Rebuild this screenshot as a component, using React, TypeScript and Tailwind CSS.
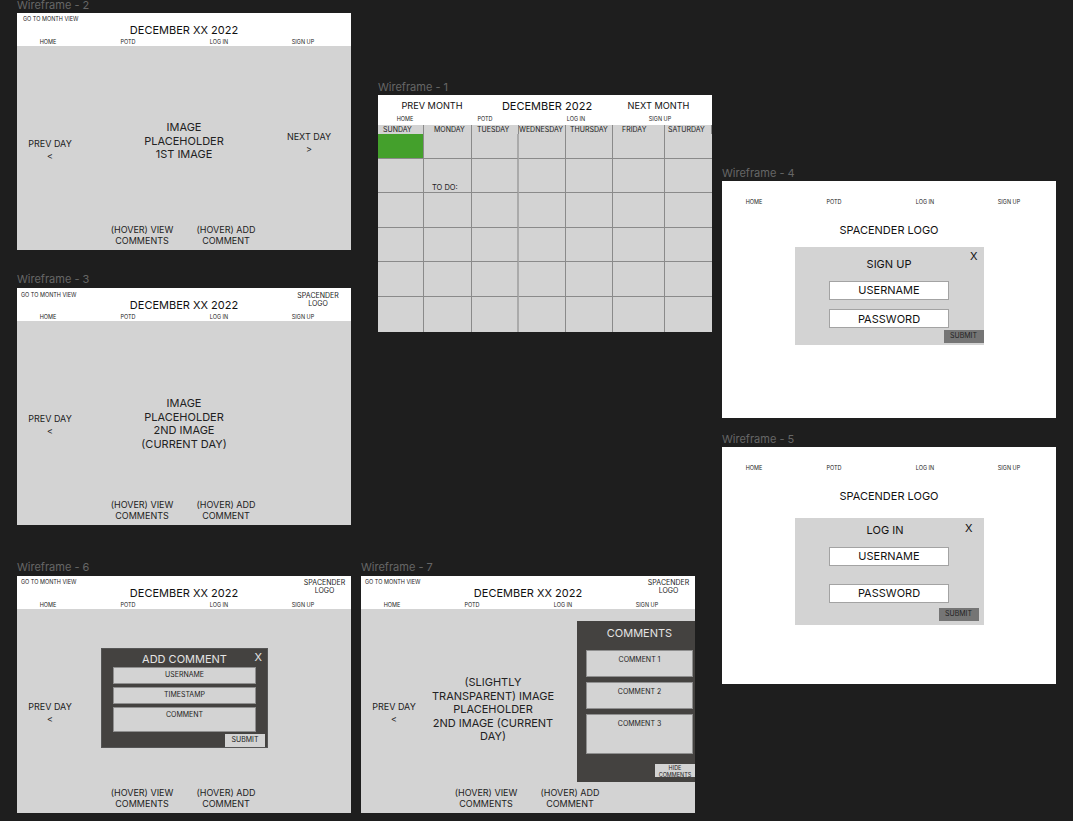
import type { ReactNode } from "react";

const DAYS = [
  { name: "SUNDAY", pad: "pl-[5px]" },
  { name: "MONDAY", pad: "pl-[10px]" },
  { name: "TUESDAY", pad: "pl-[5px]" },
  { name: "WEDNESDAY", pad: "pl-0" },
  { name: "THURSDAY", pad: "pl-[4px]" },
  { name: "FRIDAY", pad: "pl-[9px]" },
  { name: "SATURDAY", pad: "pl-[3px]" },
];

function Frame({ label, className, labelClass = "mb-px", children }: { label: string; className: string; labelClass?: string; children: ReactNode }) {
  return (
    <section className={`absolute flex h-[237px] w-[334px] flex-col bg-[#d3d3d3] ${className}`}>
      <span className={`absolute bottom-full left-0 whitespace-nowrap text-[11px] leading-[14px] text-[#666] ${labelClass}`}>{label}</span>
      {children}
    </section>
  );
}

function Nav({ className }: { className: string }) {
  return (
    <nav className={`grid text-center text-[5.5px] leading-[7px] text-[#222] ${className}`}>
      <span>HOME</span>
      <span>POTD</span>
      <span>LOG IN</span>
      <span>SIGN UP</span>
    </nav>
  );
}

function DayHeader({ logo, monthClass = "pl-1 pt-[3px]" }: { logo?: string; monthClass?: string }) {
  return (
    <header className="h-[33px] bg-white">
      <div className="grid h-[26px] grid-cols-[1fr_auto_1fr]">
        <span className={`text-[5.5px] leading-[9px] whitespace-nowrap text-[#222] ${monthClass}`}>GO TO MONTH VIEW</span>
        <h2 className="pt-[10px] text-[11px] leading-[14px] whitespace-nowrap text-[#111]">DECEMBER XX 2022</h2>
        {logo ? <span className={`text-center text-[7px] leading-[8px] whitespace-nowrap text-[#222] ${logo}`}>SPACENDER<br />LOGO</span> : <span />}
      </div>
      <Nav className="grid-cols-[62px_98px_84px_84px]" />
    </header>
  );
}

function HoverLinks() {
  return (
    <div className="flex pb-[4px] pl-[83px] text-center text-[9px] leading-[11px] text-[#222]">
      <span className="w-[84px]">(HOVER) VIEW<br />COMMENTS</span>
      <span className="w-[84px]">(HOVER) ADD<br />COMMENT</span>
    </div>
  );
}

function PrevDay() {
  return (
    <div className="pt-[92px] text-center text-[9px] leading-[11.5px] text-[#222]">PREV DAY<br />&lt;</div>
  );
}

function SignForm({ title, titleClass, xClass, gapClass, submitClass, boxClass, passwordClass }: {
  title: string; titleClass: string; xClass: string; gapClass: string; submitClass: string; boxClass: string; passwordClass: string;
}) {
  return (
    <div className="flex h-[237px] flex-col bg-white">
      <Nav className="grid-cols-[64px_96px_86px_82px] pt-[18px]" />
      <p className="pt-[17px] text-center text-[11px] leading-[14px] text-[#111]">SPACENDER LOGO</p>
      <div className={`relative mx-auto flex w-[189px] flex-col items-center bg-[#d3d3d3] text-[#111] ${boxClass}`}>
        <span className={`absolute text-[11px] leading-[14px] ${xClass}`}>X</span>
        <p className={`text-[11px] leading-[14px] ${titleClass}`}>{title}</p>
        <div className={`flex flex-col ${gapClass}`}>
          <div className="flex h-[19px] w-[120px] items-center justify-center border border-[#a3a3a3] bg-white text-[11px]">USERNAME</div>
          <div className={`flex h-[19px] w-[120px] items-center justify-center border border-[#a3a3a3] bg-white text-[11px] ${passwordClass}`}>PASSWORD</div>
        </div>
        <button className={`flex h-[13px] w-10 items-center justify-center self-end bg-[#757575] text-[7px] text-[#222] ${submitClass}`}>SUBMIT</button>
      </div>
    </div>
  );
}

export default function App() {
  return (
    <div className="relative h-[821px] w-[1073px] overflow-hidden bg-[#1e1e1e] font-[Inter,sans-serif]">
      <Frame label="Wireframe - 2" className="left-[17px] top-[13px]">
        <DayHeader monthClass="pl-[6px] pt-[2px]" />
        <div className="grid flex-1 grid-cols-[66px_1fr_66px]">
          <PrevDay />
          <div className="pt-[75px] text-center text-[11px] leading-[13.5px] text-[#222]">IMAGE<br />PLACEHOLDER<br />1ST IMAGE</div>
          <div className="-ml-[13px] w-[74px] pt-[85px] text-center text-[9px] leading-[11.5px] text-[#222]">NEXT DAY<br />&gt;</div>
        </div>
        <HoverLinks />
      </Frame>

      <Frame label="Wireframe - 3" className="left-[17px] top-[288px]" labelClass="mb-[2px]">
        <DayHeader logo="pl-[47px] pt-[4px]" monthClass="pl-1 pt-[3px]" />
        <div className="grid flex-1 grid-cols-[66px_1fr_66px]">
          <PrevDay />
          <div className="pt-[76px] text-center text-[11px] leading-[13.5px] text-[#222]">IMAGE<br />PLACEHOLDER<br />2ND IMAGE<br />(CURRENT DAY)</div>
        </div>
        <HoverLinks />
      </Frame>

      <Frame label="Wireframe - 6" className="left-[17px] top-[576px]" labelClass="mb-[2px]">
        <DayHeader logo="pl-[60px] pt-[3px]" monthClass="pl-1 pt-[2px]" />
        <div className="relative grid flex-1 grid-cols-[66px_1fr]">
          <PrevDay />
          <div className="absolute left-[84px] top-[39px] flex h-[100px] w-[167px] flex-col items-center border border-[#555] bg-[#444240]">
            <h3 className="pt-[4px] text-[11px] leading-[13px] text-[#e4e4e4]">ADD COMMENT</h3>
            <span className="absolute right-[5px] top-[1px] text-[11px] leading-[14px] text-[#e4e4e4]">X</span>
            <div className="flex flex-col gap-[3px] pt-px text-center text-[7px] leading-[9px] text-[#222]">
              <div className="h-[17px] w-[143px] border border-[#8f8f8f] bg-[#d3d3d3] pt-[2px]">USERNAME</div>
              <div className="h-[17px] w-[143px] border border-[#8f8f8f] bg-[#d3d3d3] pt-[2px]">TIMESTAMP</div>
              <div className="h-[25px] w-[143px] border border-[#8f8f8f] bg-[#d3d3d3] pt-[2px]">COMMENT</div>
            </div>
            <button className="mr-[2px] mt-[2px] flex h-[13px] w-10 items-center justify-center self-end bg-[#d3d3d3] text-[7px] text-[#222]">SUBMIT</button>
          </div>
        </div>
        <HoverLinks />
      </Frame>

      <Frame label="Wireframe - 7" className="left-[361px] top-[576px]" labelClass="mb-[2px]">
        <DayHeader logo="pl-[60px] pt-[3px]" monthClass="pl-1 pt-[2px]" />
        <div className="relative grid flex-1 grid-cols-[66px_132px]">
          <PrevDay />
          <div className="pt-[67px] text-center text-[11px] leading-[13.5px] text-[#222]">(SLIGHTLY<br />TRANSPARENT) IMAGE<br />PLACEHOLDER<br />2ND IMAGE (CURRENT<br />DAY)</div>
          <aside className="absolute right-0 top-[12px] flex h-[161px] w-[118px] flex-col items-end overflow-hidden bg-[#444240]">
            <h3 className="w-full pb-[10px] pl-[7px] pt-[5px] text-center text-[11px] leading-[14px] text-[#e4e4e4]">COMMENTS</h3>
            <div className="flex flex-col gap-[5px] pr-[2px] text-center text-[7px] leading-[9px] text-[#222]">
              <div className="h-[27px] w-[107px] border border-[#8f8f8f] bg-[#d3d3d3] pt-[4px]">COMMENT 1</div>
              <div className="h-[27px] w-[107px] border border-[#8f8f8f] bg-[#d3d3d3] pt-[4px]">COMMENT 2</div>
              <div className="h-[40px] w-[107px] border border-[#8f8f8f] bg-[#d3d3d3] pt-[4px]">COMMENT 3</div>
            </div>
            <div className="mt-[10px] h-[13px] w-10 bg-[#d3d3d3] pt-px text-center text-[5.5px] leading-[6.5px] text-[#222]">HIDE<br />COMMENTS</div>
          </aside>
        </div>
        <HoverLinks />
      </Frame>

      <Frame label="Wireframe - 1" className="left-[378px] top-[95px]">
        <header className="h-[30px] bg-white">
          <div className="grid h-[19px] grid-cols-[108px_1fr_107px] text-center text-[#111]">
            <span className="pt-[4px] text-[9.2px] leading-[14px]">PREV MONTH</span>
            <h2 className="pl-[3px] pt-[4px] text-[11px] leading-[15px]">DECEMBER 2022</h2>
            <span className="pt-[4px] text-[9.2px] leading-[14px]">NEXT MONTH</span>
          </div>
          <Nav className="grid-cols-[54px_106px_76px_92px] pt-[2px]" />
        </header>
        <div className="grid flex-1 grid-cols-[46px_48px_47px_47px_47px_52px_47px] grid-rows-[9px_25px_34px_35px_34px_35px_1fr]">
          {DAYS.map(day => (
            <span key={day.name} className={`border-r border-[#8a8a8a] text-[7px] leading-[9px] whitespace-nowrap text-[#222] last:border-r-0 ${day.pad}`}>{day.name}</span>
          ))}
          {Array.from({ length: 42 }, (_, i) => (
            <div key={i} className={`flex items-end border-[#8a8a8a] pl-[8px] text-[7.5px] leading-[8px] text-[#222] ${i % 7 === 6 ? "" : "border-r"} ${i % 7 === 2 ? "border-r-2 border-r-[#aaaaaa]" : ""} ${i >= 35 ? "" : "border-b"} ${i === 0 ? "bg-[#44a02c]" : ""}`}>
              {i === 8 && "TO DO:"}
            </div>
          ))}
        </div>
      </Frame>

      <Frame label="Wireframe - 4" className="left-[722px] top-[181px]">
        <SignForm
          title="SIGN UP"
          boxClass="mt-[10px] h-[98px]"
          titleClass="pt-[10px] pb-[10px]"
          xClass="right-[6px] top-[2px]"
          gapClass="gap-[9px]"
          submitClass="mt-[2px]"
          passwordClass="pt-[2px]"
        />
      </Frame>

      <Frame label="Wireframe - 5" className="left-[722px] top-[447px]">
        <SignForm
          title="LOG IN"
          boxClass="mt-[15px] h-[107px]"
          titleClass="pt-[5px] pb-[10px] pr-[8px]"
          xClass="right-[11px] top-[3px]"
          gapClass="gap-[18px]"
          submitClass="mt-[5px] mr-[5px]"
          passwordClass=""
        />
      </Frame>
    </div>
  );
}
